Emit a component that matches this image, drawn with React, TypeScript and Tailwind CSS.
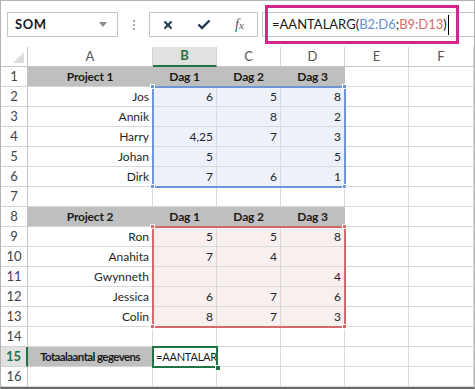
import React from 'react'

const font = { fontFamily: 'Lato, "Liberation Sans", sans-serif' }

type Row = { a?: string; b?: string; c?: string; d?: string; head?: boolean }

const rows: Row[] = [
  { a: 'Project 1', b: 'Dag 1', c: 'Dag 2', d: 'Dag 3', head: true },
  { a: 'Jos', b: '6', c: '5', d: '8' },
  { a: 'Annik', c: '8', d: '2' },
  { a: 'Harry', b: '4,25', c: '7', d: '3' },
  { a: 'Johan', b: '5', d: '5' },
  { a: 'Dirk', b: '7', c: '6', d: '1' },
  {},
  { a: 'Project 2', b: 'Dag 1', c: 'Dag 2', d: 'Dag 3', head: true },
  { a: 'Ron', b: '5', c: '5', d: '8' },
  { a: 'Anahita', b: '7', c: '4' },
  { a: 'Gwynneth', d: '4' },
  { a: 'Jessica', b: '6', c: '7', d: '6' },
  { a: 'Colin', b: '8', c: '7', d: '3' },
  {},
  { a: 'Totaalaantal gegevens' },
  {},
]

const cols = ['A', 'B', 'C', 'D', 'E', 'F']

function fillFor(r: number, c: number) {
  if (c >= 1 && c <= 3 && r >= 2 && r <= 6) return 'bg-[#edf1f9]'
  if (c >= 1 && c <= 3 && r >= 9 && r <= 13) return 'bg-[#f7f0ef]'
  return 'bg-white'
}

function Handle({ x, y, color }: { x: number; y: number; color: string }) {
  return (
    <div
      className={`absolute w-[5px] h-[5px] ${color} border border-white`}
      style={{ left: x - 3, top: y - 3 }}
    />
  )
}

function Range({ top, color, handle }: { top: number; color: string; handle: string }) {
  // covers B..D, five rows
  return (
    <>
      <div className={`absolute left-[151px] w-[194px] h-[102px] border-2 ${color}`} style={{ top }} />
      <Handle x={152} y={top + 1} color={handle} />
      <Handle x={344} y={top + 1} color={handle} />
      <Handle x={152} y={top + 101} color={handle} />
      <Handle x={344} y={top + 101} color={handle} />
    </>
  )
}

export default function App() {
  return (
    <div
      className="relative w-[475px] h-[389px] overflow-hidden bg-white border-t border-x border-[#b4b4b4] border-b-2 border-b-[#6b6b6b] text-[#262626]"
      style={font}
    >
      {/* formula bar */}
      <div className="h-[46px] flex items-start pt-[11px]">
        <div className="ml-[6px] w-[111px] h-[25px] border border-[#c6c6c6] flex items-center justify-between pl-[7px] pr-[10px]">
          <span className="text-[13px] font-bold tracking-[0.5px] text-[#1a1a1a]">SOM</span>
          <svg width="8" height="5" viewBox="0 0 8 5">
            <path d="M0 0h8L4 5z" fill="#8a8a8a" />
          </svg>
        </div>
        <div className="w-[31px] h-[25px] flex flex-col items-center justify-center gap-[2px]">
          <span className="w-[2px] h-[2px] bg-[#a8a8a8]" />
          <span className="w-[2px] h-[2px] bg-[#a8a8a8]" />
          <span className="w-[2px] h-[2px] bg-[#a8a8a8]" />
        </div>
        <div className="w-[109px] h-[25px] border border-[#c6c6c6] flex items-center">
          <div className="w-[35px] flex justify-center">
            <svg width="10" height="10" viewBox="0 0 10 10">
              <path d="M1.5 1.5l7 7M8.5 1.5l-7 7" stroke="#1f3550" strokeWidth="2" />
            </svg>
          </div>
          <div className="w-[37px] flex justify-center">
            <svg width="14" height="11" viewBox="0 0 14 11">
              <path d="M1.5 5.5l3.5 3.5L12.5 1.5" stroke="#1f3550" strokeWidth="2.4" fill="none" />
            </svg>
          </div>
          <div className="w-[35px] flex justify-center">
            <span className="text-[14px] italic text-[#555]" style={{ fontFamily: '"Liberation Serif", serif' }}>
              f<span className="text-[11px]">x</span>
            </span>
          </div>
        </div>
        <div className="ml-[4px] flex-1 h-[25px] border-y border-l border-[#c6c6c6] flex items-center pl-[9px]">
          <span className="text-[13px] text-[#1a1a1a]">
            =AANTALARG(<span className="text-[#5f8fd3]">B2:D6</span>;<span className="text-[#d46b6b]">B9:D13</span>)
          </span>
          <span className="ml-[1px] w-[1px] h-[20px] bg-black" />
        </div>
      </div>

      {/* magenta callout */}
      <div className="absolute left-[264px] top-[4px] w-[194px] h-[39px] border-[3px] border-[#d2268a]" />

      {/* sheet */}
      <div className="grid grid-cols-[27px_125px_64px_64px_64px_64px_65px] auto-rows-[20px] text-[12px]">
        {/* header row */}
        <div className="relative border-r border-b border-[#c6c6c6] bg-white">
          <svg className="absolute right-[3px] bottom-[3px]" width="11" height="11" viewBox="0 0 11 11">
            <path d="M11 0v11H0z" fill="#dcdcdc" />
          </svg>
        </div>
        {cols.map((c) =>
          c === 'B' ? (
            <div
              key={c}
              className="flex items-center justify-center bg-[#e1e1e1] border-r border-[#d4d4d4] border-b-2 border-b-[#217346] text-[13px] font-bold text-[#217346]"
            >
              {c}
            </div>
          ) : (
            <div
              key={c}
              className="flex items-center justify-center border-r border-b border-[#d4d4d4] border-b-[#c6c6c6] text-[13px] text-[#555]"
            >
              {c}
            </div>
          ),
        )}

        {rows.map((row, i) => {
          const r = i + 1
          const active = r === 15
          const vals = [row.a, row.b, row.c, row.d, undefined, undefined]
          return (
            <React.Fragment key={r}>
              <div
                className={`flex items-center justify-center border-b border-[#d4d4d4] text-[13px] ${
                  active
                    ? 'bg-[#e1e1e1] border-r-2 border-r-[#217346] text-[#217346] font-bold'
                    : 'border-r border-r-[#c6c6c6] text-[#444]'
                }`}
              >
                {r}
              </div>
              {vals.map((v, c) => {
                const gray = (row.head && c <= 3) || (active && c === 0)
                const centered = row.head || (active && c === 0)
                return (
                  <div
                    key={c}
                    className={`flex items-center overflow-hidden whitespace-nowrap border-b border-r pt-[1px] ${
                      gray
                        ? `px-0 bg-[#bfbfbf] border-r-[#bfbfbf] border-b-[#d4d4d4] font-bold text-[#1a1a1a] ${
                            active ? 'text-[11.5px] tracking-[-0.6px]' : 'text-[12px] tracking-[-0.2px]'
                          }`
                        : `px-[3px] ${fillFor(r, c)} border-[#d9d9d9]`
                    } ${centered ? 'justify-center' : 'justify-end'}`}
                  >
                    {active && c === 1 ? (
                      <span className="w-full text-left text-[11px] tracking-[-0.2px] text-[#1a1a1a] -ml-[1px]">
                        =AANTALARG
                      </span>
                    ) : (
                      v
                    )}
                  </div>
                )
              })}
            </React.Fragment>
          )
        })}
      </div>

      {/* ranges */}
      <Range top={85} color="border-[#6e95d8]" handle="bg-[#6e95d8]" />
      <Range top={225} color="border-[#d46b6b]" handle="bg-[#d46b6b]" />

      {/* active cell */}
      <div className="absolute left-[151px] top-[345px] w-[66px] h-[22px] border-2 border-[#217346]" />
      <div className="absolute left-[214px] top-[364px] w-[6px] h-[6px] bg-[#217346] border border-white" />
    </div>
  )
}
